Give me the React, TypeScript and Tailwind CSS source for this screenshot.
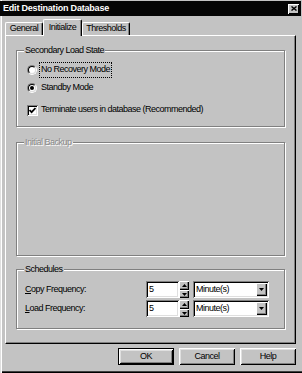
import React from "react";

const raised =
  "shadow-[inset_1px_1px_0_#fff,inset_-1px_-1px_0_#000,inset_2px_2px_0_#dfdfdf,inset_-2px_-2px_0_#808080]";
const raisedThin = "shadow-[inset_1px_1px_0_#fff,inset_-1px_-1px_0_#000,inset_-2px_-2px_0_#808080]";
const sunken =
  "shadow-[inset_1px_1px_0_#808080,inset_-1px_-1px_0_#fff,inset_2px_2px_0_#000,inset_-2px_-2px_0_#dfdfdf]";

function Group({
  label,
  disabled,
  className,
  children,
}: {
  label: string;
  disabled?: boolean;
  className: string;
  children?: React.ReactNode;
}) {
  return (
    <div
      className={`ml-[10px] w-[269px] flex flex-col border border-[#808080] shadow-[inset_1px_1px_0_#fff,1px_1px_0_#fff] ${className}`}
    >
      <div
        className={`-mt-[7px] ml-[7px] self-start px-[1px] h-[12px] leading-[12px] bg-[#c3c3c3] ${
          disabled ? "text-[#8a8a8a] [text-shadow:1px_1px_0_#fff]" : ""
        }`}
      >
        {label}
      </div>
      {children}
    </div>
  );
}

function Radio({ label, checked, focused }: { label: string; checked?: boolean; focused?: boolean }) {
  return (
    <div className="flex items-center h-[16px]">
      <div className="w-[10px] h-[10px] rounded-full border border-t-[#808080] border-l-[#808080] border-r-white border-b-white">
        <div className="w-full h-full rounded-full bg-white border border-t-black border-l-black border-r-[#dfdfdf] border-b-[#dfdfdf] flex items-center justify-center">
          {checked && <div className="w-[4px] h-[4px] rounded-full bg-black" />}
        </div>
      </div>
      <div
        className={`ml-[2px] h-[16px] px-[1px] flex items-center border border-dotted ${
          focused ? "border-black" : "border-transparent"
        }`}
      >
        {label}
      </div>
    </div>
  );
}

function Tab({ label, width, selected }: { label: string; width: string; selected?: boolean }) {
  return (
    <div
      className={`${width} ${
        selected ? "relative z-10 -mb-px h-[17px]" : "h-[13px]"
      } flex items-center justify-center bg-[#c3c3c3] border-t border-l border-r border-t-white border-l-white border-r-black rounded-t-[2px] shadow-[inset_-1px_0_0_#808080]`}
    >
      {label}
    </div>
  );
}

function SpinArrow({ up }: { up?: boolean }) {
  return (
    <svg width="5" height="3" viewBox="0 0 5 3">
      <path d={up ? "M0 3 L2.5 0 L5 3 Z" : "M0 0 L2.5 3 L5 0 Z"} fill="#000" />
    </svg>
  );
}

function FreqRow({ u, rest }: { u: string; rest: string }) {
  return (
    <div className="flex items-center h-[17px]">
      <div className="w-[121px]">
        <span className="underline underline-offset-[1px]">{u}</span>
        {rest}
      </div>
      <div className={`w-[33px] h-[17px] bg-white ${sunken} flex items-center pl-[3px]`}>5</div>
      <div className="w-[10px] h-[17px] flex flex-col">
        <div className={`h-[9px] bg-[#c3c3c3] ${raisedThin} flex items-center justify-center`}>
          <SpinArrow up />
        </div>
        <div className={`h-[8px] bg-[#c3c3c3] ${raisedThin} flex items-center justify-center`}>
          <SpinArrow />
        </div>
      </div>
      <div className={`ml-[4px] w-[76px] h-[17px] bg-white ${sunken} flex items-center p-[2px]`}>
        <div className="flex-1 pl-[1px]">Minute(s)</div>
        <div className={`w-[11px] h-[13px] bg-[#c3c3c3] ${raisedThin} flex items-center justify-center`}>
          <svg width="5" height="3" viewBox="0 0 5 3">
            <path d="M0 0 L2.5 3 L5 0 Z" fill="#000" />
          </svg>
        </div>
      </div>
    </div>
  );
}

function Button({ label, def }: { label: string; def?: boolean }) {
  return (
    <div
      className={`w-[56px] h-[17px] bg-[#c3c3c3] flex items-center justify-center ${
        def ? "border border-black" : ""
      } ${raised}`}
    >
      {label}
    </div>
  );
}

export default function App() {
  return (
    <div className="w-[302px] h-[373px] bg-[#c3c3c3] flex flex-col text-black text-[9px] tracking-[-0.5px] font-['Liberation_Sans',Arial,sans-serif] shadow-[inset_1px_0_0_#dfdfdf,inset_2px_0_0_#fff,inset_0_-1px_0_#000,inset_0_-2px_0_#404040] overflow-hidden">
      {/* Title bar */}
      <div className="mt-[1px] mr-[1px] h-[15px] bg-[#050505] flex items-center justify-between pl-[3px] pr-[2px]">
        <span className="text-white font-bold tracking-[-0.2px] leading-[15px]">Edit Destination Database</span>
        <div className="w-[11px] h-[10px] bg-[#c3c3c3] shadow-[inset_1px_1px_0_#fff,inset_-1px_-1px_0_#000] flex items-center justify-center">
          <svg width="6" height="5" viewBox="0 0 6 5">
            <path d="M0.5 0.5 L5.5 4.5 M5.5 0.5 L0.5 4.5" stroke="#000" strokeWidth="1.4" />
          </svg>
        </div>
      </div>

      {/* Tabs */}
      <div className="mt-[3px] pl-[5px] h-[16px] flex items-end">
        <Tab label="General" width="w-[38px]" />
        <Tab label="Initialize" width="w-[39px]" selected />
        <Tab label="Thresholds" width="w-[48px]" />
      </div>

      {/* Panel */}
      <div className="ml-[5px] w-[291px] h-[309px] flex flex-col border-t border-l border-r border-b border-t-white border-l-white border-r-black border-b-black shadow-[inset_-1px_-1px_0_#808080]">
        <Group label="Secondary Load State" className="mt-[14px] h-[77px]">
          <div className="mt-[6px] pl-[10px] flex flex-col gap-[2px]">
            <Radio label="No Recovery Mode" focused />
            <Radio label="Standby Mode" checked />
            <div className="mt-[4px] flex items-center h-[16px]">
              <div className={`w-[11px] h-[11px] bg-white ${sunken} flex items-center justify-center`}>
                <svg width="7" height="7" viewBox="0 0 7 7">
                  <path d="M0.5 3 L2.6 5.2 L6.5 1" stroke="#000" strokeWidth="1.7" fill="none" />
                </svg>
              </div>
              <div className="ml-[1px] h-[16px] px-[1px] flex items-center border border-transparent">
                Terminate users in database (Recommended)
              </div>
            </div>
          </div>
        </Group>

        <Group label="Initial Backup" disabled className="mt-[15px] h-[114px]" />

        <Group label="Schedules" className="mt-[13px] h-[60px]">
          <div className="mt-[6px] pl-[8px] flex flex-col gap-[2px]">
            <FreqRow u="C" rest="opy Frequency:" />
            <FreqRow u="L" rest="oad Frequency:" />
          </div>
        </Group>
      </div>

      {/* Buttons */}
      <div className="mt-[4px] pr-[6px] flex justify-end gap-[5px]">
        <Button label="OK" def />
        <Button label="Cancel" />
        <Button label="Help" />
      </div>
    </div>
  );
}
